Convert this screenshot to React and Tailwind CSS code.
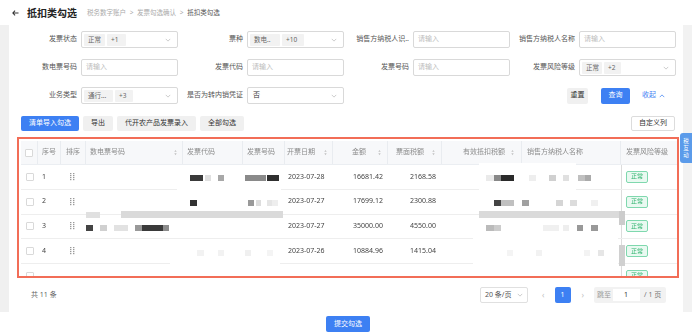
import React from "react";

const cols = [
  { key: "chk", cls: "w-[17px] justify-center" },
  { key: "idx", cls: "w-[23px] pl-[4px]", title: "序号" },
  { key: "drag", cls: "w-[25px] pl-[5px]", title: "排序" },
  { key: "sd", cls: "w-[97px] pl-[4px] pr-[5px]", title: "数电票号码", sort: true },
  { key: "code", cls: "w-[60px] pl-[4px]", title: "发票代码" },
  { key: "no", cls: "w-[42px] pl-[4px]", title: "发票号码" },
  { key: "date", cls: "w-[48px] pl-[2px] pr-[5px]", title: "开票日期", sort: true },
  { key: "amt", cls: "w-[55px] pl-[19px] pr-[6px]", title: "金额", sort: true },
  { key: "tax", cls: "w-[54px] pl-[8px] pr-[6px]", title: "票面税额", sort: true },
  { key: "eff", cls: "w-[80px] pl-[21px] pr-[7px]", title: "有效抵扣税额", sort: true },
  { key: "seller", cls: "w-[99px] pl-[5px]", title: "销售方纳税人名称" },
  { key: "risk", cls: "w-[55px] pl-[5px]", title: "发票风险等级" },
];

const rows = [
  { n: 1, date: "2023-07-28", amt: "16681.42", tax: "2168.58" },
  { n: 2, date: "2023-07-27", amt: "17699.12", tax: "2300.88" },
  { n: 3, date: "2023-07-27", amt: "35000.00", tax: "4550.00" },
  { n: 4, date: "2023-07-26", amt: "10884.96", tax: "1415.04" },
  { n: 5, date: "", amt: "", tax: "" },
];

// mosaic redaction laid over the table body: [x, y, w, h, colour], page coords
const patches = [
  [177, 167, 104, 40],
  [479, 163, 97, 47],
  [170, 241, 110, 34],
  [473, 218, 145, 50],
];

const blobs = [
  [190, 175, 13, 6, "#3a3a3a"], [205, 175, 6, 6, "#e0e0e0"], [218, 175, 6, 6, "#a8a8a8"],
  [245, 175, 21, 6, "#8a8a8a"], [267, 175, 12, 6, "#2f2f2f"],
  [486, 175, 8, 6, "#eaeaea"], [494, 175, 7, 6, "#888888"], [501, 175, 13, 6, "#2a2a2a"],
  [529, 175, 7, 6, "#eeeeee"], [549, 175, 7, 6, "#d0d0d0"], [563, 175, 6, 6, "#e0e0e0"],
  [578, 175, 7, 6, "#c0c0c0"], [585, 175, 6, 6, "#aaaaaa"],
  [190, 200, 7, 6, "#333333"], [248, 200, 6, 6, "#999999"], [256, 200, 5, 6, "#dddddd"],
  [267, 200, 5, 6, "#e5e5e5"], [272, 200, 6, 6, "#eeeeee"],
  [494, 200, 7, 6, "#444444"], [501, 200, 13, 6, "#c0c0c0"], [522, 200, 7, 6, "#a0a0a0"],
  [556, 200, 7, 6, "#d5d5d5"], [570, 200, 7, 6, "#dcdcdc"], [591, 200, 7, 6, "#f0f0f0"],
  [86, 225, 7, 6, "#444444"], [100, 225, 7, 6, "#d0d0d0"], [114, 225, 14, 6, "#e2e2e2"],
  [135, 225, 7, 6, "#999999"], [142, 225, 21, 6, "#3a3a3a"], [163, 225, 6, 6, "#8c8c8c"],
  [486, 225, 8, 6, "#bbbbbb"], [494, 225, 7, 6, "#cccccc"], [543, 225, 16, 6, "#f0f0f0"],
  [563, 225, 6, 6, "#eeeeee"], [577, 225, 6, 6, "#999999"], [591, 225, 7, 6, "#999999"],
  [197, 250, 7, 6, "#f2f2f2"], [218, 250, 6, 6, "#f2f2f2"], [245, 250, 6, 6, "#f0f0f0"],
  [267, 250, 6, 6, "#f4f4f4"], [507, 250, 6, 6, "#f4f4f4"], [536, 250, 6, 6, "#f2f2f2"],
  [584, 250, 6, 6, "#f3f3f3"], [598, 250, 6, 6, "#e6e6e6"],
  [86, 212, 14, 6, "#e0e0e0"], [121, 211, 162, 7, "#dadada"], [479, 211, 146, 7, "#dadada"],
  [619, 211, 6, 14, "#cccccc"], [619, 245, 6, 21, "#d0d0d0"],
];

function Chevron({ up = false, color = "#bbb", className = "" }) {
  return (
    <svg viewBox="0 0 8 5" className={`w-[6px] h-[4px] ${className}`} fill="none" stroke={color} strokeWidth="1">
      <polyline points={up ? "1,4 4,1 7,4" : "1,1 4,4 7,1"} />
    </svg>
  );
}

function SortIcon() {
  return (
    <svg viewBox="0 0 4 8" className="w-[3px] h-[7px] ml-auto shrink-0">
      <path d="M2 0.5 L3.6 3 H0.4Z" fill="#c0c0c0" />
      <path d="M2 7.5 L3.6 5 H0.4Z" fill="#c0c0c0" />
    </svg>
  );
}

function DragIcon() {
  const dots = [];
  for (let r = 0; r < 4; r++) {
    for (let c = 0; c < 2; c++) dots.push(<rect key={r + "-" + c} x={c * 3} y={r * 2} width="1.4" height="1.2" fill="#9a9a9a" />);
  }
  return (
    <svg viewBox="0 0 5 8" className="w-[5px] h-[8px]">
      {dots}
    </svg>
  );
}

function Checkbox() {
  return <span className="w-[8px] h-[8px] border border-[#d9d9d9] rounded-[1px] bg-white" />;
}

function Field({ label, children }) {
  return (
    <div className="flex items-center w-[166px]">
      <span className="w-[69px] pr-[4px] text-right text-[7px] text-[#555] whitespace-nowrap overflow-hidden">{label}</span>
      {children}
    </div>
  );
}

function Input() {
  return (
    <div className="w-[97px] h-[17px] border border-[#d9d9d9] rounded-[2px] bg-white flex items-center px-[4px] text-[7px] text-[#bdbdbd]">
      请输入
    </div>
  );
}

function Select({ tags, value }) {
  return (
    <div className="w-[97px] h-[17px] border border-[#d9d9d9] rounded-[2px] bg-white flex items-center pl-[2px] pr-[6px] gap-[2px]">
      {tags &&
        tags.map((t) => (
          <span key={t.label} className={`h-[12px] ${t.w} bg-[#f2f2f2] rounded-[1px] flex items-center pl-[4px] text-[6.5px] text-[#666] whitespace-nowrap`}>
            {t.label}
          </span>
        ))}
      {value && <span className="pl-[3px] text-[7px] text-[#333]">{value}</span>}
      <Chevron className="ml-auto" />
    </div>
  );
}

function Btn({ children, primary, w }) {
  return (
    <span
      className={`h-[15px] ${w} rounded-[2px] flex items-center justify-center text-[7px] whitespace-nowrap ${
        primary ? "bg-[#3d80f3] text-white" : "bg-[#f0f0f0] text-[#333]"
      }`}
    >
      {children}
    </span>
  );
}

function Table() {
  return (
    <div className="ml-[8px] mt-[6px] w-[662px] h-[141px] border-2 border-[#f26d57] overflow-hidden will-change-transform">
      <div className="relative pt-[2px] pl-[2px]">
        <div className="flex h-[24px] bg-[#f7f8fa] border-b border-[#ebeef2]">
          {cols.map((c, i) => (
            <div
              key={c.key}
              className={`${c.cls} shrink-0 flex items-center text-[7px] text-[#8c8c8c] whitespace-nowrap ${
                i < cols.length - 1 ? "border-r border-[#e9ecf0]" : ""
              }`}
            >
              {c.key === "chk" ? <Checkbox /> : c.title}
              {c.sort && <SortIcon />}
            </div>
          ))}
        </div>
        {rows.map((r) => (
          <div key={r.n} className="flex h-[24.75px] border-b border-[#eeeeee] text-[7px] text-[#444]">
            <div className="w-[17px] shrink-0 flex items-center justify-center">
              <Checkbox />
            </div>
            <div className="w-[23px] shrink-0 flex items-center pl-[4px]">{r.n < 5 ? r.n : ""}</div>
            <div className="w-[25px] shrink-0 flex items-center pl-[9px]">{r.n < 5 && <DragIcon />}</div>
            <div className="w-[97px] shrink-0" />
            <div className="w-[60px] shrink-0" />
            <div className="w-[42px] shrink-0" />
            <div className="w-[48px] shrink-0 flex items-center pl-[3px]">{r.date}</div>
            <div className="w-[55px] shrink-0 flex items-center justify-end pr-[5px]">{r.amt}</div>
            <div className="w-[54px] shrink-0 flex items-center justify-end pr-[6px]">{r.tax}</div>
            <div className="w-[80px] shrink-0" />
            <div className="w-[99px] shrink-0" />
            <div className="w-[55px] shrink-0 flex items-center pl-[4px] border-l border-[#dcdcdc]">
              <span className="h-[12px] w-[22px] border border-[#7fd8ae] bg-[#e9f9f1] rounded-[2px] flex items-center justify-center text-[6px] text-[#2fb46e]">
                正常
              </span>
            </div>
          </div>
        ))}
        {patches.map(([x, y, w, h], i) => (
          <span
            key={"p" + i}
            className="absolute bg-white"
            style={{ left: x - 19, top: y - 139, width: w, height: h }}
          />
        ))}
        {blobs.map(([x, y, w, h, c], i) => (
          <span key={"b" + i} className="absolute" style={{ left: x - 19, top: y - 139, width: w, height: h, background: c }} />
        ))}
      </div>
    </div>
  );
}

export default function App() {
  return (
    <div className="relative w-[692px] h-[336px] bg-white overflow-hidden flex flex-col antialiased font-['Noto_Sans','Noto_Sans_CJK_SC',sans-serif]">
      {/* header */}
      <div className="h-[25px] shrink-0 flex items-center pl-[12px]">
        <svg viewBox="0 0 8 7" className="w-[7px] h-[6px]" fill="none" stroke="#333" strokeWidth="1.2">
          <path d="M7.5 3.5 H1 M3.5 0.8 L0.9 3.5 L3.5 6.2" />
        </svg>
        <span className="ml-[8px] text-[10px] font-bold text-[#222] leading-none">抵扣类勾选</span>
        <span className="ml-[10px] text-[6.5px] text-[#aaa] whitespace-nowrap">
          税务数字账户 <span className="mx-[2px]">&gt;</span> 发票勾选确认 <span className="mx-[2px]">&gt;</span>{" "}
          <span className="text-[#555]">抵扣类勾选</span>
        </span>
      </div>

      <div className="flex h-[287px] shrink-0">
        <div className="w-[9px] bg-[#f0f0f0]" />
        <div className="flex-1 flex flex-col">
          {/* filters */}
          <div className="pt-[6px] pl-[3px] flex flex-col gap-[11px]">
            <div className="flex h-[17px]">
              <Field label="发票状态">
                <Select tags={[{ label: "正常", w: "w-[21px]" }, { label: "+1", w: "w-[19px]" }]} />
              </Field>
              <Field label="票种">
                <Select tags={[{ label: "数电..", w: "w-[30px]" }, { label: "+10", w: "w-[22px]" }]} />
              </Field>
              <Field label="销售方纳税人识..">
                <Input />
              </Field>
              <Field label="销售方纳税人名称">
                <Input />
              </Field>
            </div>
            <div className="flex h-[17px]">
              <Field label="数电票号码">
                <Input />
              </Field>
              <Field label="发票代码">
                <Input />
              </Field>
              <Field label="发票号码">
                <Input />
              </Field>
              <Field label="发票风险等级">
                <Select tags={[{ label: "正常", w: "w-[20px]" }, { label: "+2", w: "w-[17px]" }]} />
              </Field>
            </div>
            <div className="flex h-[17px] items-center">
              <Field label="业务类型">
                <Select tags={[{ label: "通行...", w: "w-[29px]" }, { label: "+3", w: "w-[18px]" }]} />
              </Field>
              <Field label="是否为转内销凭证">
                <Select value="否" />
              </Field>
              <div className="flex-1 flex items-center justify-end pr-[18px]">
                <span className="h-[16px] w-[21px] bg-[#f0f0f0] rounded-[2px] flex items-center justify-center text-[7px] text-[#333]">重置</span>
                <span className="ml-[13px] h-[16px] w-[29px] bg-[#3d80f3] rounded-[2px] flex items-center justify-center text-[7px] text-white">查询</span>
                <span className="ml-[12px] flex items-center gap-[3px] text-[7px] text-[#3d80f3]">
                  收起
                  <Chevron up color="#3d80f3" />
                </span>
              </div>
            </div>
          </div>

          {/* toolbar */}
          <div className="mt-[12px] pl-[12px] pr-[8px] flex items-center gap-[4px]">
            <Btn primary w="w-[58px]">清单导入勾选</Btn>
            <Btn w="w-[30px]">导出</Btn>
            <Btn w="w-[79px]">代开农产品发票录入</Btn>
            <Btn w="w-[44px]">全部勾选</Btn>
            <span className="ml-auto h-[15px] w-[44px] border border-[#dcdcdc] rounded-[2px] bg-white flex items-center justify-center text-[7px] text-[#333]">
              自定义列
            </span>
          </div>

          <Table />

          {/* footer */}
          <div className="mt-[9px] h-[16px] flex items-center pl-[22px] pr-[17px] text-[7px] text-[#666]">
            <span>共 11 条</span>
            <span className="ml-auto h-[16px] w-[48px] border border-[#e0e0e0] rounded-[2px] flex items-center px-[4px] gap-[3px] text-[#555]">
              20 条/页
              <Chevron className="ml-auto" />
            </span>
            <span className="ml-[14px] text-[#c0c0c0] text-[8px]">‹</span>
            <span className="ml-[10px] h-[16px] w-[16px] bg-[#3d80f3] rounded-[2px] flex items-center justify-center text-white">1</span>
            <span className="ml-[11px] text-[#c0c0c0] text-[8px]">›</span>
            <span className="ml-[10px] h-[16px] w-[72px] bg-[#f2f2f2] rounded-[2px] flex items-center pl-[3px] text-[#999]">
              跳至
              <span className="ml-[2px] h-[12px] w-[27px] bg-white flex items-center pl-[11px] text-[#333]">1</span>
              <span className="ml-[4px] text-[#777]">/ 1 页</span>
            </span>
          </div>
        </div>
        <div className="w-[9px] bg-[#f2f2f2]" />
      </div>

      <div className="flex-1 flex justify-center pt-[4px] pl-[4px]">
        <span className="h-[16px] w-[44px] bg-[#3d80f3] rounded-[2px] flex items-center justify-center text-[7px] text-white">
          提交勾选
        </span>
      </div>

      {/* floating side tab */}
      <div className="absolute left-[680px] top-[133px] w-[12px] h-[30px] bg-[#5b9bea] rounded-l-[3px] flex flex-col items-center justify-center text-[5.5px] leading-[7px] text-white">
        <span>税</span>
        <span>互</span>
        <span>动</span>
      </div>
    </div>
  );
}
